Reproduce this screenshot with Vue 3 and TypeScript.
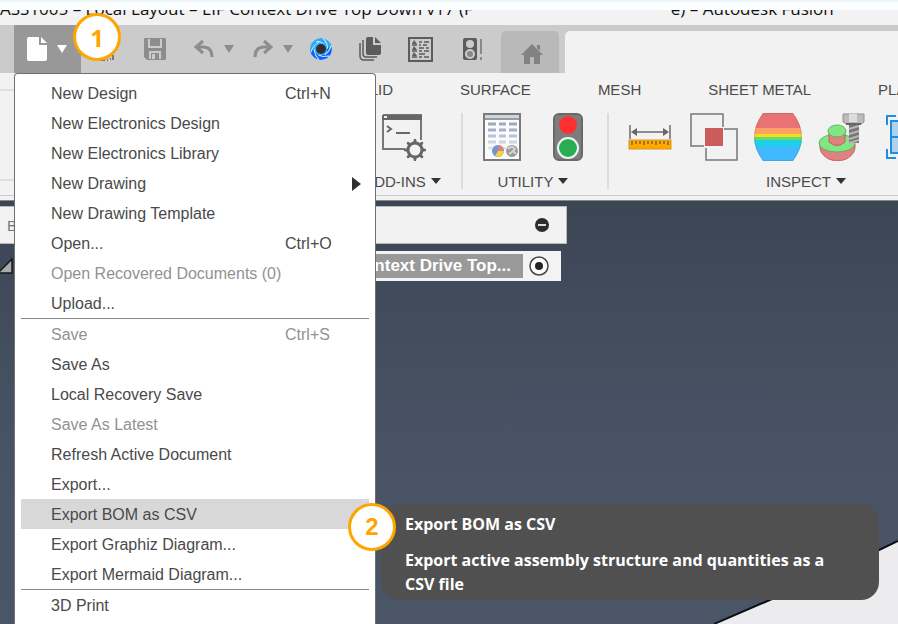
<script setup lang="ts">
import { ref } from 'vue'

interface MenuItem {
  label: string
  shortcut?: string
  disabled?: boolean
  submenu?: boolean
}

const menuSections: MenuItem[][] = [
  [
    { label: 'New Design', shortcut: 'Ctrl+N' },
    { label: 'New Electronics Design' },
    { label: 'New Electronics Library' },
    { label: 'New Drawing', submenu: true },
    { label: 'New Drawing Template' },
    { label: 'Open...', shortcut: 'Ctrl+O' },
    { label: 'Open Recovered Documents (0)', disabled: true },
    { label: 'Upload...' },
  ],
  [
    { label: 'Save', shortcut: 'Ctrl+S', disabled: true },
    { label: 'Save As' },
    { label: 'Local Recovery Save' },
    { label: 'Save As Latest', disabled: true },
    { label: 'Refresh Active Document' },
    { label: 'Export...' },
    { label: 'Export BOM as CSV' },
    { label: 'Export Graphiz Diagram...' },
    { label: 'Export Mermaid Diagram...' },
  ],
  [{ label: '3D Print' }],
]

const tabs: string[] = ['SOLID', 'SURFACE', 'MESH', 'SHEET METAL', 'PLASTIC']
const active = ref<string>('Export BOM as CSV')
const gearTeeth: number[] = [0, 45, 90, 135, 180, 225, 270, 315]
const petals: number[] = [0, 60, 120, 180, 240, 300]
const tableRows: number[] = [10, 16, 22, 28, 34]
</script>

<template>
  <div class="app">
    <header class="title-bar">
      <span class="title">ASS1005 – Local Layout – EIF Context Drive Top Down v17 (F</span>
      <span class="title">e) – Autodesk Fusion</span>
    </header>

    <div class="toolbar">
      <button class="tool file" aria-label="File">
        <svg width="20" height="24" viewBox="0 0 20 24"><path d="M2 0H12V8H20V22Q20 24 18 24H2Q0 24 0 22V2Q0 0 2 0Z" fill="#fff" /><path d="M14 0L20 6H14Z" fill="#fff" /></svg>
        <svg width="10" height="8" viewBox="0 0 10 8"><path d="M0 0H10L5 8Z" fill="#fff" /></svg>
      </button>
      <button class="tool open" aria-label="Open">
        <svg width="26" height="24" viewBox="0 0 26 24"><path d="M4 5H12L14 8H18V16H4Z" fill="none" stroke="#777" stroke-width="2" /><path d="M7 23H12M14 23H15M15 19V21M17 22H18M20 18V23" stroke="#777" stroke-width="2" /></svg>
      </button>
      <button class="tool" aria-label="Save">
        <svg width="22" height="22" viewBox="0 0 22 22"><path d="M1 0H21Q22 0 22 1V21Q22 22 21 22H3L0 19V1Q0 0 1 0Z" fill="#8d8d8d" /><path d="M5 1V9H17V1M6 21V14H16V21" fill="none" stroke="#cbcbcb" stroke-width="2" /><path d="M8 16h3v5h-3z" fill="#cbcbcb" /></svg>
      </button>
      <button class="tool undo" aria-label="Undo">
        <svg width="20" height="20" viewBox="0 0 20 20"><path d="M9 2L2 8L9 14M3 8H9Q18 8 18 18" fill="none" stroke="#8d8d8d" stroke-width="3" /></svg>
        <svg width="10" height="8" viewBox="0 0 10 8"><path d="M0 0H10L5 8Z" fill="#8d8d8d" /></svg>
      </button>
      <button class="tool" aria-label="Redo">
        <svg width="20" height="20" viewBox="0 0 20 20"><path d="M11 2L18 8L11 14M17 8H11Q2 8 2 18" fill="none" stroke="#8d8d8d" stroke-width="3" /></svg>
        <svg width="10" height="8" viewBox="0 0 10 8"><path d="M0 0H10L5 8Z" fill="#8d8d8d" /></svg>
      </button>
      <button class="tool" aria-label="Viewer">
        <svg width="24" height="24" viewBox="-12 -12 24 24">
          <circle r="10" fill="#1288f2" />
          <g v-for="a in petals" :key="a" :transform="`rotate(${a})`">
            <path d="M-7 -8Q0 -14 7 -8Q1 -9 -3 -5Z" :fill="a > 60 && a < 300 ? '#0d62ff' : '#25aefc'" />
            <path d="M-8 -7Q-2 -9 5 -5" fill="none" stroke="#d9eafa" stroke-width="1" />
          </g>
          <circle r="6" fill="#49b4f4" /><circle r="5" fill="#2d3035" />
        </svg>
      </button>
      <button class="tool wide" aria-label="Copies">
        <svg width="22" height="24" viewBox="0 0 22 24"><path d="M9 0H14V8H22V16Q22 18 20 18H9Q7 18 7 16V2Q7 0 9 0Z" fill="#5c5c5c" /><path d="M16 0L22 6H16Z" fill="#5c5c5c" /><path d="M4 3V17Q4 20 7 20H18M1 6V19Q1 23 5 23H15" fill="none" stroke="#5c5c5c" stroke-width="1.5" /></svg>
      </button>
      <button class="tool wide" aria-label="Parameters">
        <svg width="25" height="25" viewBox="0 0 25 25"><rect x="1" y="1" width="23" height="23" fill="none" stroke="#5c5c5c" stroke-width="2" /><path d="M4 7L6 3L9 7ZM4 13L6 9L9 13ZM4 19L6 15L9 19Z" fill="#5c5c5c" /><path d="M11 5h3M16 5h5M11 8h2M15 8h4M4 8h5M11 11h5M18 11h3M4 14h5M11 14h3M16 14h5M11 17h6M11 20h3M16 20h5M4 20h5" stroke="#5c5c5c" stroke-width="1.5" /></svg>
      </button>
      <button class="tool wide last" aria-label="Status alert">
        <svg width="20" height="22" viewBox="0 0 20 22"><rect width="14" height="22" rx="2" fill="#5c5c5c" /><circle cx="7" cy="6" r="4" fill="#cbcbcb" /><circle cx="7" cy="16" r="4" fill="#888" stroke="#cbcbcb" stroke-width="2" /><path d="M18 1V16M18 19V22" stroke="#888" stroke-width="2" /></svg>
      </button>
      <button class="home" aria-label="Home">
        <svg width="22" height="20" viewBox="0 0 22 20"><path d="M11 0L22 11H19V20H13V13H9V20H3V11H0Z" fill="#828282" /><path d="M16 1H19V7L16 4Z" fill="#828282" /></svg>
      </button>
      <div class="document-tab"></div>
    </div>

    <section class="ribbon">
      <div class="workspace-box"></div>
      <nav class="tabs">
        <a v-for="tab in tabs" :key="tab" href="#" @click.prevent>{{ tab }}</a>
      </nav>
      <div class="groups">
        <div class="group">
          <div class="icons">
            <svg width="48" height="48" viewBox="0 0 48 48">
              <path d="M4 2H42V27M4 2V36H26" fill="none" stroke="#777" stroke-width="2" /><path d="M3 2H43V7H3Z" fill="#666" /><path d="M5 3h3v2H5z" fill="#eee" />
              <path d="M8 13L12 16L8 19" fill="none" stroke="#666" stroke-width="2" /><path d="M17 20H31" stroke="#666" stroke-width="2" />
              <circle cx="36" cy="37" r="7" fill="none" stroke="#666" stroke-width="3" />
              <path v-for="a in gearTeeth" :key="a" d="M34 30L35 26H37L38 30Z" :transform="`rotate(${a} 36 37)`" fill="#666" />
            </svg>
          </div>
          <button class="group-label">ADD-INS<i class="caret"></i></button>
        </div>
        <div class="divider"></div>
        <div class="group utility">
          <div class="icons">
            <svg width="38" height="48" viewBox="0 0 38 48">
              <rect x="1" y="1" width="36" height="46" fill="#fafbfc" stroke="#7b7b7b" stroke-width="2" /><path d="M2 2H36V5H2Z" fill="#cfd6df" /><path d="M1 6H37" stroke="#7b7b7b" stroke-width="1.5" />
              <path v-for="(y, i) in tableRows" :key="y" :d="`M5 ${y + 1}h8M16 ${y + 1}h7M26 ${y + 1}h8`" :stroke="['#a0a7c0', '#a8b0c9', '#bac2d6', '#cfd4df', '#e0e3e9'][i]" stroke-width="3" />
              <circle cx="15" cy="38" r="6" fill="#7695cf" /><path d="M15 38V32A6 6 0 0 1 21 38Z" fill="#dc8484" /><path d="M15 38H21A6 6 0 0 1 12 43Z" fill="#f3d43c" />
              <circle cx="29" cy="38" r="6" fill="#9a9a9a" /><path d="M25 36Q29 32 32 36Q28 40 26 41M30 38L33 41" fill="none" stroke="#d6d6d6" stroke-width="2" />
            </svg>
            <svg width="30" height="48" viewBox="0 0 30 48"><rect x="1" y="1" width="28" height="46" rx="5" fill="#7d7d7d" stroke="#696969" stroke-width="2" /><circle cx="15" cy="12" r="9" fill="#ff3030" /><circle cx="15" cy="35" r="10" fill="#27ad54" stroke="#f4f4f4" stroke-width="2" /></svg>
          </div>
          <button class="group-label">UTILITY<i class="caret"></i></button>
        </div>
        <div class="divider"></div>
        <div class="group inspect">
          <div class="icons">
            <svg width="48" height="48" viewBox="0 0 48 48"><path d="M4 12V26M44 12V26M7 19H41" stroke="#6c6c6c" stroke-width="1.5" /><path d="M5 19L11 15V23ZM43 19L37 15V23Z" fill="#666" /><rect x="3" y="27" width="42" height="9" fill="#ffa800" stroke="#dc9322" /><path d="M6 28V32M10 28V31M14 28V31M18 28V32M22 28V31M26 28V31M30 28V32M34 28V31M38 28V31M42 28V32" stroke="#87661c" stroke-width="1.5" /></svg>
            <svg width="48" height="48" viewBox="0 0 48 48"><path d="M14 33H1V1H33V14M34 16H47V47H16V35" fill="none" stroke="#777" stroke-width="1.5" /><rect x="15" y="15" width="18" height="18" fill="#cc5b5b" /></svg>
            <svg width="48" height="48" viewBox="0 0 48 48">
              <defs><clipPath id="barrel"><path d="M9 0H39Q57 24 39 48H9Q-9 24 9 0Z" /></clipPath></defs>
              <g clip-path="url(#barrel)"><path d="M0 0H48V15H0Z" fill="#e97372" /><path d="M0 15H48V21H0Z" fill="#ffa066" /><path d="M0 21H48V24H0Z" fill="#f0df1b" /><path d="M0 24H48V27H0Z" fill="#6bd86b" /><path d="M0 27H48V33H0Z" fill="#1cd1e6" /><path d="M0 33H48V48H0Z" fill="#40baff" /><path d="M9 0H39Q57 24 39 48H9Q-9 24 9 0Z" fill="none" stroke="#555" stroke-opacity=".2" stroke-width="2" /></g>
            </svg>
            <svg width="48" height="48" viewBox="0 0 48 48">
              <path d="M2 31V35C5 52 34 52 37 35V31Z" fill="#e28180" stroke="#bf6060" /><ellipse cx="19" cy="30" rx="18" ry="9" fill="#82e783" stroke="#59b85e" />
              <path d="M11 18V29Q19 36 27 29V18Z" fill="#e28180" stroke="#bf6060" /><ellipse cx="19" cy="18" rx="9" ry="6" fill="#82e783" stroke="#59b85e" />
              <path d="M31 12H41V30H31Z" fill="#777" /><path d="M31 16L41 13M31 21L41 18M31 26L41 23M31 30L41 27" stroke="#b7b7b7" stroke-width="2" /><path d="M25 1H46V9L43 11H29L25 9Z" fill="#bcbcbc" stroke="#929292" /><path d="M31 1H39V9H31Z" fill="#ddd" /><path d="M28 10H43V12H28Z" fill="#666" />
            </svg>
            <svg width="48" height="48" viewBox="0 0 48 48"><path d="M14 3H5V12M5 36V45H14M40 3H47V12M47 36V45H40" fill="none" stroke="#1d8fe1" stroke-width="2" /><path d="M9 8H43V40H9Z" fill="#afd1ee" stroke="#1d8fe1" stroke-width="2" /><path d="M9 24H43" stroke="#1d8fe1" stroke-width="2" /></svg>
            <svg width="40" height="48" viewBox="0 0 40 48"><path d="M4 12H36V36H4Z" fill="none" stroke="#777" stroke-width="2" /></svg>
          </div>
          <button class="group-label">INSPECT<i class="caret"></i></button>
        </div>
      </div>
    </section>

    <main class="viewport">
      <svg class="model" width="184" height="84" viewBox="0 0 184 84"><path d="M0 84L58 59L165 10L184 1V84Z" fill="#ececee" /><path d="M0 84L58 59L165 10L184 1" fill="none" stroke="#0d0f12" stroke-width="2" /></svg>
      <div class="browser-head">
        <span>BROWSER</span>
        <button aria-label="Collapse browser"><svg width="14" height="14" viewBox="0 0 14 14"><circle cx="7" cy="7" r="7" fill="#2c2c2c" /><path d="M3 7H11" stroke="#ddd" stroke-width="2" /></svg></button>
      </div>
      <div class="tree-row">
        <svg width="13" height="16" viewBox="0 0 13 16"><path d="M12 1V15H-2Z" fill="#aaa" stroke="#15181c" stroke-width="1.5" /></svg>
        <div class="component">
          <span class="component-name">Layout - EIF Context Drive Top...</span>
          <button aria-label="Activate component"><svg width="20" height="20" viewBox="0 0 20 20"><circle cx="10" cy="10" r="9" fill="#fff" stroke="#444" stroke-width="1.5" /><circle cx="10" cy="10" r="4" fill="#252525" /></svg></button>
        </div>
      </div>
    </main>

    <div class="menu" role="menu">
      <div v-for="(section, i) in menuSections" :key="i" class="section">
        <button
          v-for="item in section"
          :key="item.label"
          class="item"
          role="menuitem"
          :class="{ active: active === item.label }"
          :disabled="item.disabled"
          @mouseenter="active = item.label"
        >
          <span>{{ item.label }}</span>
          <span v-if="item.shortcut">{{ item.shortcut }}</span>
          <svg v-if="item.submenu" class="submenu" width="9" height="14" viewBox="0 0 9 14"><path d="M0 0L9 7L0 14Z" fill="#303030" /></svg>
        </button>
      </div>
    </div>

    <div class="tooltip" role="tooltip">
      <p>Export BOM as CSV</p>
      <p>Export active assembly structure and quantities as a CSV file</p>
    </div>

    <div class="badge first">1</div>
    <div class="badge second">2</div>
  </div>
</template>

<style>
body {
  overflow: hidden;
}
</style>

<style scoped>
.app {
  position: relative;
  display: flex;
  flex-direction: column;
  height: 100vh;
  overflow: hidden;
  font-family: "Liberation Sans", Arial, sans-serif;
  font-size: 16px;
  color: #4a4a4a;
}
button {
  border: 0;
  padding: 0;
  background: none;
  font: inherit;
  color: inherit;
}
svg {
  display: block;
  flex: none;
}
.title-bar {
  position: relative;
  display: flex;
  flex: none;
  gap: 198px;
  height: 25px;
  overflow: hidden;
  background: #f2f2f2;
  color: #111;
  font-family: "Open Sans", "Noto Sans", sans-serif;
  font-size: 17px;
  line-height: 17px;
  white-space: nowrap;
}
.title-bar::after {
  content: "";
  position: absolute;
  inset: 0 0 auto;
  height: 10px;
  background: linear-gradient(#eef8fb 2px, #fdfeff 2px);
}
.toolbar {
  display: flex;
  flex: none;
  align-items: flex-end;
  height: 48px;
  padding-left: 14px;
  background: #cbcbcb;
}
.tool {
  display: flex;
  flex: none;
  align-items: center;
  justify-content: center;
  gap: 10px;
  width: 48px;
  height: 48px;
}
.tool.file {
  width: 67px;
  padding: 0 14px 0 12px;
  background: #989898;
}
.tool.open,
.tool.wide {
  width: 50px;
}
.tool.undo {
  width: 70px;
}
.tool.last {
  width: 56px;
}
.home {
  display: flex;
  flex: none;
  align-items: center;
  justify-content: center;
  width: 58px;
  height: 42px;
  margin-right: 6px;
  padding: 4px 0 0 4px;
  border-radius: 5px 5px 0 0;
  background: #b9b9b9;
}
.document-tab {
  flex: 1;
  height: 42px;
  border-radius: 5px 0 0 0;
  background: #f2f2f2;
}
.ribbon {
  position: relative;
  flex: none;
  height: 122px;
  border-bottom: 1px solid #c9c9c9;
  box-shadow: 0 4px #f2f2f2, 0 5px #858989;
  margin-bottom: 5px;
  background: #f2f2f2;
}
.workspace-box {
  position: absolute;
  top: 16px;
  left: 0;
  width: 160px;
  height: 88px;
  border: solid #dedede;
  border-width: 2px 0;
}
.tabs {
  display: flex;
  gap: 67px;
  height: 32px;
  padding-left: 348px;
  overflow: hidden;
  font-size: 15px;
  line-height: 34px;
  white-space: nowrap;
}
.tabs a {
  color: inherit;
  text-decoration: none;
}
.groups {
  display: flex;
  padding: 8px 0 0 344px;
  overflow: hidden;
}
.group {
  display: flex;
  flex: none;
  flex-direction: column;
  align-items: center;
  gap: 8px;
  width: 117px;
}
.group.utility {
  box-sizing: border-box;
  width: 144px;
  padding-right: 4px;
}
.group.inspect {
  width: auto;
  padding: 0 17px;
}
.icons {
  display: flex;
  gap: 16px;
}
.utility .icons {
  gap: 32px;
}
.group-label {
  display: flex;
  align-items: center;
  gap: 5px;
  height: 24px;
  font-size: 15px;
}
.caret {
  border: solid transparent;
  border-width: 6px 5px 0;
  border-top-color: #333;
}
.divider {
  flex: none;
  width: 2px;
  height: 76px;
  background: #dcdcdc;
}
.viewport {
  position: relative;
  flex: 1;
  padding-top: 5px;
  background: linear-gradient(#3c4554, #485466 60%, #4a5568);
}
.model {
  position: absolute;
  right: 0;
  bottom: 0;
}
.browser-head {
  display: flex;
  align-items: center;
  justify-content: space-between;
  box-sizing: border-box;
  width: 567px;
  height: 38px;
  padding: 0 17px 0 7px;
  border: 1px solid #b8b9b9;
  border-left: 0;
  background: #f2f2f2;
  color: #777;
  font-size: 15px;
}
.tree-row {
  display: flex;
  align-items: center;
  gap: 27px;
  width: 561px;
  margin-top: 7px;
}
.component {
  display: flex;
  flex: 1;
  align-items: center;
  gap: 6px;
  padding: 3px 12px 3px 0;
  background: #f3f3f3;
}
.component-name {
  flex: 1;
  padding-right: 12px;
  background: #999;
  color: #fff;
  font-size: 17px;
  font-weight: 700;
  line-height: 24px;
  text-align: right;
  white-space: nowrap;
}
.menu {
  position: absolute;
  top: 73px;
  bottom: 0;
  left: 14px;
  box-sizing: border-box;
  width: 362px;
  padding: 4px 6px 0;
  overflow: hidden;
  border: 1px solid #707070;
  border-bottom: 0;
  border-radius: 4px 4px 0 0;
  background: #fff;
}
.section + .section {
  border-top: 1px solid #868686;
}
.item {
  display: grid;
  grid-template-columns: 1fr 84px;
  align-items: center;
  width: 100%;
  height: 30px;
  padding: 2px 0 0 30px;
  text-align: left;
  white-space: nowrap;
}
.item:disabled {
  color: #929292;
}
.item.active {
  background: #d8d8d8;
}
.submenu {
  justify-self: end;
  margin-right: 8px;
}
.tooltip {
  position: absolute;
  top: 504px;
  right: 19px;
  left: 381px;
  display: flex;
  flex-direction: column;
  gap: 12px;
  padding: 8px 24px 4px;
  border-radius: 18px;
  background: #505050;
  color: #fff;
  font-family: "Open Sans", "Noto Sans", sans-serif;
  font-weight: 700;
  line-height: 24px;
}
.tooltip p {
  margin: 0;
}
.badge {
  position: absolute;
  display: flex;
  align-items: center;
  justify-content: center;
  box-sizing: border-box;
  width: 48px;
  height: 48px;
  border: 3px solid #ffa500;
  border-radius: 50%;
  background: #fff;
  color: #ffa500;
  font-size: 24px;
  font-weight: 700;
}
.badge.first {
  top: 13px;
  left: 73px;
  font-family: "Open Sans", sans-serif;
}
.badge.second {
  top: 503px;
  left: 348px;
}
</style>
